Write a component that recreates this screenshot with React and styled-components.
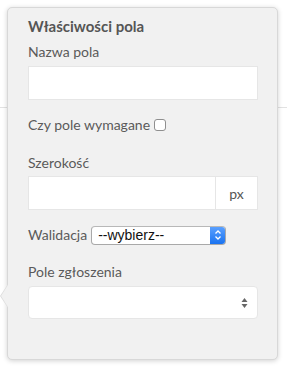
import React from "react";
import styled, { createGlobalStyle } from "styled-components";

const Global = createGlobalStyle`
  html, body { margin: 0; padding: 0; }
  body {
    width: 287px;
    height: 368px;
    background: #ffffff linear-gradient(#e2e2e2, #e2e2e2) 0 107px / 100% 1px no-repeat;
    font-family: "Lato", "Open Sans", Arial, sans-serif;
    overflow: hidden;
  }
`;

const Page = styled.div`
  padding: 7px 9px 8px 7px;
`;

const Popover = styled.div`
  position: relative;
  box-sizing: border-box;
  width: 271px;
  height: 353px;
  background: #f1f1f1;
  border: 1px solid #d8d8d8;
  border-radius: 5px;
  box-shadow: 0 1px 5px rgba(0, 0, 0, 0.18);
  padding: 8px 20px 0 20px;
  color: #5a5a5a;
`;

const Arrow = styled.div`
  position: absolute;
  left: -8px;
  top: 276px;
  width: 0;
  height: 0;
  border-style: solid;
  border-width: 12px 8px 12px 0;
  border-color: transparent #dcdcdc transparent transparent;
  &::after {
    content: "";
    position: absolute;
    left: 1px;
    top: -11px;
    border-style: solid;
    border-width: 11px 7px 11px 0;
    border-color: transparent #f1f1f1 transparent transparent;
  }
`;

const Title = styled.div`
  font-weight: 700;
  font-size: 15px;
  line-height: 20px;
  color: #555;
  margin-bottom: 6px;
`;

const Label = styled.div`
  font-size: 14px;
  line-height: 20px;
  margin-bottom: ${(p) => p.$mb ?? 4}px;
`;

const Field = styled.div`
  margin-bottom: ${(p) => p.$mb || 0}px;
`;

const TextInput = styled.div`
  box-sizing: border-box;
  height: 34px;
  width: 230px;
  background: #fff;
  border: 1px solid #e6e6e6;
`;

const InputGroup = styled.div`
  display: flex;
  width: 230px;
  height: 34px;
`;

const GroupInput = styled.div`
  flex: 1;
  box-sizing: border-box;
  background: #fff;
  border: 1px solid #e6e6e6;
`;

const Addon = styled.div`
  box-sizing: border-box;
  width: 42px;
  background: #fff;
  border: 1px solid #e6e6e6;
  border-left: none;
  display: flex;
  align-items: center;
  justify-content: center;
  font-size: 14px;
  color: #555;
`;

const CheckRow = styled.label`
  display: flex;
  align-items: center;
  gap: 4px;
  font-size: 14px;
  line-height: 20px;
`;

const Check = styled.span`
  display: inline-block;
  box-sizing: border-box;
  width: 12px;
  height: 12px;
  border: 1px solid #8f8f8f;
  border-radius: 3px;
  background: #fff;
`;

const InlineRow = styled.div`
  display: flex;
  align-items: center;
  gap: 4px;
  font-size: 14px;
  line-height: 20px;
`;

const NativeSelect = styled.div`
  box-sizing: border-box;
  width: 135px;
  height: 19px;
  display: flex;
  align-items: stretch;
  background: #fff;
  border: 1px solid #a9a9a9;
  border-top-color: #b8b8b8;
  border-radius: 4px;
  overflow: hidden;
  font-family: "Liberation Sans", Arial, sans-serif;
  font-size: 14px;
  color: #111;
`;

const SelectText = styled.span`
  flex: 1;
  padding-left: 6px;
  line-height: 17px;
`;

const Stepper = styled.span`
  width: 15px;
  background: linear-gradient(#5aa0ff, #1a73f0);
  display: flex;
  align-items: center;
  justify-content: center;
`;

const BigSelect = styled.div`
  box-sizing: border-box;
  width: 230px;
  height: 33px;
  background: #fff;
  border: 1px solid #e6e6e6;
  border-radius: 4px;
  display: flex;
  align-items: center;
  justify-content: flex-end;
  padding-right: 9px;
`;

export default function App() {
  return (
    <>
      <Global />
      <Page>
        <Popover>
          <Arrow />
          <Title>Właściwości pola</Title>
          <Field $mb={15}>
            <Label>Nazwa pola</Label>
            <TextInput />
          </Field>
          <Field $mb={18}>
            <CheckRow>
              Czy pole wymagane <Check />
            </CheckRow>
          </Field>
          <Field $mb={15}>
            <Label $mb={3}>Szerokość</Label>
            <InputGroup>
              <GroupInput />
              <Addon>px</Addon>
            </InputGroup>
          </Field>
          <Field $mb={17}>
            <InlineRow>
              Walidacja
              <NativeSelect>
                <SelectText>--wybierz--</SelectText>
                <Stepper>
                  <svg width="8" height="12" viewBox="0 0 8 12">
                    <path d="M1.5 4.5 L4 2 L6.5 4.5 M1.5 7.5 L4 10 L6.5 7.5" fill="none" stroke="#fff" strokeWidth="1.3" />
                  </svg>
                </Stepper>
              </NativeSelect>
            </InlineRow>
          </Field>
          <Field>
            <Label>Pole zgłoszenia</Label>
            <BigSelect>
              <svg width="7" height="12" viewBox="0 0 7 12">
                <path d="M3.5 1 L6.5 5 L0.5 5 Z M0.5 7 L6.5 7 L3.5 11 Z" fill="#666" />
              </svg>
            </BigSelect>
          </Field>
        </Popover>
      </Page>
    </>
  );
}
